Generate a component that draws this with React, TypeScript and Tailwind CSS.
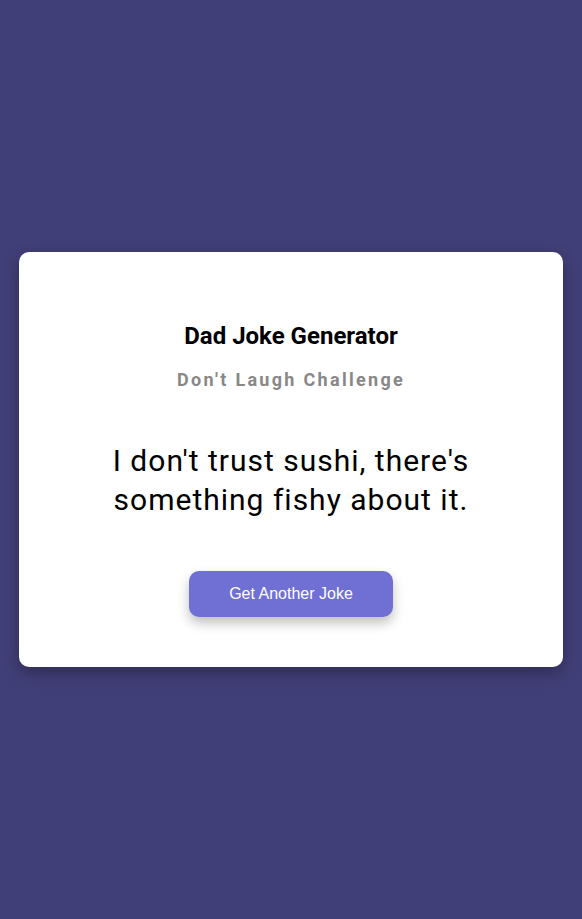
export default function App() {
  return (
    <div className="min-h-screen bg-[#413f77] flex items-center justify-center px-[19px]">
      <div className="w-full bg-white rounded-[10px] shadow-[0_6px_16px_rgba(0,0,0,0.3)] px-10 pt-[70px] pb-[50px] flex flex-col items-center text-center">
        <h1 className="font-['Roboto',sans-serif] font-bold text-[24px] leading-[28px] text-black">
          Dad Joke Generator
        </h1>
        <h2 className="mt-[18px] font-['Roboto',sans-serif] font-bold text-[18px] leading-[24px] tracking-[2.3px] text-[#888888]">
          Don't Laugh Challenge
        </h2>
        <p className="mt-[49px] max-w-[400px] font-['Roboto',sans-serif] text-[30px] leading-[39px] tracking-[1px] text-black">
          I don't trust sushi, there's something fishy about it.
        </p>
        <button className="mt-[52px] w-[204px] h-[46px] rounded-[10px] bg-[#7070d4] text-white font-['Liberation_Sans',Arial,sans-serif] text-[16px] shadow-[0_6px_12px_rgba(0,0,0,0.25)]">
          Get Another Joke
        </button>
      </div>
    </div>
  );
}
